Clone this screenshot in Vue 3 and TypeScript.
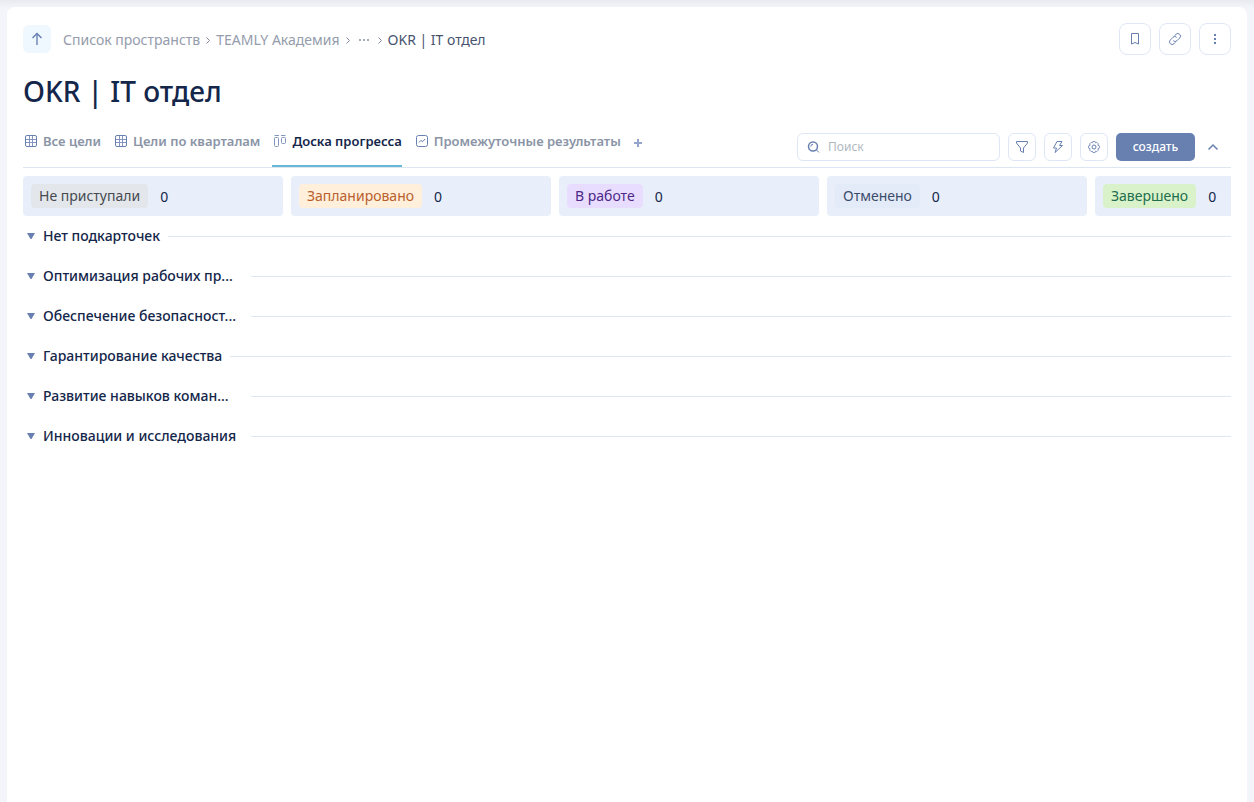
<script setup lang="ts">
import { ref } from 'vue'

type TabIcon = 'table' | 'board' | 'chart'

interface Tab {
  id: number
  label: string
  icon: TabIcon
}

interface Column {
  label: string
  tone: string
  count: number
}

interface Group {
  label: string
  clipped: boolean
}

const crumbs: string[] = ['Список пространств', 'TEAMLY Академия', '···']

const tabs: Tab[] = [
  { id: 1, label: 'Все цели', icon: 'table' },
  { id: 2, label: 'Цели по кварталам', icon: 'table' },
  { id: 3, label: 'Доска прогресса', icon: 'board' },
  { id: 4, label: 'Промежуточные результаты', icon: 'chart' },
]

const columns: Column[] = [
  { label: 'Не приступали', tone: 'grey', count: 0 },
  { label: 'Запланировано', tone: 'orange', count: 0 },
  { label: 'В работе', tone: 'purple', count: 0 },
  { label: 'Отменено', tone: 'blue', count: 0 },
  { label: 'Завершено', tone: 'green', count: 0 },
]

const groups: Group[] = [
  { label: 'Нет подкарточек', clipped: false },
  { label: 'Оптимизация рабочих пр...', clipped: true },
  { label: 'Обеспечение безопасност...', clipped: true },
  { label: 'Гарантирование качества', clipped: false },
  { label: 'Развитие навыков коман...', clipped: true },
  { label: 'Инновации и исследования', clipped: true },
]

const activeTab = ref(3)
const query = ref('')
</script>

<template>
  <div class="page">
    <main class="card">
      <header class="top">
        <button class="up" type="button" aria-label="Наверх">
          <svg width="16" height="16" viewBox="0 0 16 16"><path class="pale" d="M8 14V3" /><path class="bold" d="M3.500 7 8 2.500 12.500 7" /></svg>
        </button>
        <nav class="crumbs">
          <template v-for="crumb in crumbs" :key="crumb">
            <a v-if="crumb !== '···'" href="#">{{ crumb }}</a>
            <a v-else class="more" href="#" aria-label="Ещё">
              <svg width="12" height="12" viewBox="0 0 12 12"><path class="solid" d="M1 5h2v2H1zM5 5h2v2H5zM9 5h2v2H9z" /></svg>
            </a>
            <svg class="sep" width="16" height="16" viewBox="0 0 16 16"><path d="m6.500 5.500 3 3-3 3" /></svg>
          </template>
          <a class="current" href="#">OKR | IT отдел</a>
        </nav>
        <div class="actions">
          <button class="square" type="button" aria-label="В закладки">
            <svg width="16" height="16" viewBox="0 0 16 16"><path d="M4.500 2.500h7v10.500L8 11.500 4.500 13z" /></svg>
          </button>
          <button class="square" type="button" aria-label="Ссылка">
            <svg width="16" height="16" viewBox="0 0 16 16"><path d="M6.300 9.700a2.600 2.600 0 0 0 3.700 0l2.700-2.700a2.600 2.600 0 0 0-3.700-3.700L7.600 4.700M9.700 6.300a2.600 2.600 0 0 0-3.700 0L3.300 9a2.600 2.600 0 0 0 3.700 3.700l1.400-1.400" /></svg>
          </button>
          <button class="square" type="button" aria-label="Меню">
            <svg width="16" height="16" viewBox="0 0 16 16"><path class="solid" d="M7 3h2v2H7zM7 7h2v2H7zM7 11h2v2H7z" /></svg>
          </button>
        </div>
      </header>

      <h1>OKR | IT отдел</h1>

      <div class="bar">
        <nav class="tabs">
          <button
            v-for="tab in tabs"
            :key="tab.id"
            type="button"
            class="tab"
            :class="{ active: tab.id === activeTab }"
            @click="activeTab = tab.id"
          >
            <svg width="16" height="16" viewBox="0 0 16 16">
              <template v-if="tab.icon === 'table'">
                <path class="thin" d="M6.500 2.500v11M9.500 2.500v11M2.500 6.500h11M2.500 9.500h11" />
                <rect x="2.500" y="2.500" width="11" height="11" rx="1.500" />
              </template>
              <template v-else-if="tab.icon === 'board'">
                <path class="thin" d="M2.500 2.500h4.500M9 2.500h4.500" />
                <rect class="thin" x="2.500" y="4.500" width="4" height="9" rx="1" />
                <rect class="thin" x="9.500" y="4.500" width="4" height="6" rx="1" />
              </template>
              <template v-else>
                <rect x="2.500" y="2.500" width="11" height="11" rx="2" />
                <path d="m5 9.500 1.800-2 2 1 2.200-2.500" />
              </template>
            </svg>
            <span>{{ tab.label }}</span>
          </button>
          <button class="add" type="button" aria-label="Добавить">
            <svg width="10" height="10" viewBox="0 0 10 10"><path class="pale" d="M5 1v8M1 5h8" /></svg>
          </button>
        </nav>

        <div class="tools">
          <label class="search">
            <svg width="16" height="16" viewBox="0 0 16 16"><circle class="bold" cx="7" cy="7.500" r="4.500" /><path d="m10.500 11 2.500 2.500M4.800 7.500a2.200 2.200 0 0 1 2.200-2.200" /></svg>
            <input v-model="query" type="text" placeholder="Поиск" aria-label="Поиск" />
          </label>
          <button class="tool" type="button" aria-label="Фильтр">
            <svg width="16" height="16" viewBox="0 0 16 16"><path d="M2.500 2.500h11v1.500L9.500 9v4.500l-3-1.500V9l-4-5z" /></svg>
          </button>
          <button class="tool" type="button" aria-label="Автоматизация">
            <svg width="16" height="16" viewBox="0 0 16 16"><path d="M7 2.500h5L9.500 6.500h3L5 13.500l1.500-4.500h-3z" /></svg>
          </button>
          <button class="tool" type="button" aria-label="Настройки">
            <svg width="16" height="16" viewBox="0 0 16 16">
              <path class="thin" d="M6.900 2.500h2.200l.4 1.400 1.300-.6 1.600 1.600-.6 1.300 1.600.7v2.200l-1.600.7.6 1.300-1.600 1.600-1.300-.6-.4 1.400H6.900l-.4-1.400-1.300.6-1.600-1.600.6-1.300-1.600-.7V6.900l1.600-.7-.6-1.300 1.600-1.600 1.300.6z" />
              <circle cx="8" cy="8" r="2" />
            </svg>
          </button>
          <button class="create" type="button">создать</button>
          <button class="fold" type="button" aria-label="Свернуть">
            <svg width="16" height="16" viewBox="0 0 16 16"><path class="bold" d="m3.500 10.500 4.500-4.500 4.500 4.500" /></svg>
          </button>
        </div>
      </div>

      <section class="columns">
        <div v-for="column in columns" :key="column.label" class="column">
          <span class="tag" :class="column.tone">{{ column.label }}</span>
          <span class="count">{{ column.count }}</span>
        </div>
      </section>

      <section class="groups">
        <button v-for="group in groups" :key="group.label" type="button" class="group">
          <svg width="8" height="6" viewBox="0 0 8 6"><path class="solid" d="M0 0h8L4.500 6h-1z" /></svg>
          <span class="name" :class="{ clipped: group.clipped }">{{ group.label }}</span>
          <span class="rule"></span>
        </button>
      </section>
    </main>
  </div>
</template>

<style>
body {
  margin: 0;
  background: #f4f5fa;
}
</style>

<style scoped>
.page {
  box-sizing: border-box;
  min-height: 100vh;
  padding: 7px 7px 0;
  display: flex;
  background: linear-gradient(#e9eaef, #f4f5fa 8px);
  font-family: "Noto Sans", "Open Sans", sans-serif;
  font-size: 14px;
  line-height: 20px;
  color: #14264a;
}

.card {
  box-sizing: border-box;
  flex: 1;
  min-width: 0;
  padding: 16px 16px 0;
  background: #fff;
  border-radius: 8px 8px 0 0;
}

button {
  padding: 0;
  border: 0;
  background: none;
  font: inherit;
  color: inherit;
  cursor: pointer;
}

a {
  color: inherit;
  text-decoration: none;
}

svg {
  display: block;
  flex: none;
  fill: none;
  stroke: #6880b0;
  stroke-width: 1;
}

.solid {
  fill: #6880b0;
  stroke: none;
}

.thin {
  stroke: #8496bf;
}

.pale {
  stroke: #93a5cb;
  stroke-width: 2;
}

.bold {
  stroke-width: 1.500;
}

.top {
  display: flex;
  align-items: center;
  height: 32px;
}

.up {
  display: grid;
  place-items: center;
  width: 28px;
  height: 28px;
  border-radius: 6px;
  background: #eff8ff;
}

.crumbs {
  flex: 1;
  display: flex;
  align-items: center;
  margin-left: 12px;
  padding-top: 2px;
  color: #959cab;
}

.crumbs .more svg {
  margin: 0 2px;
}

.more .solid {
  fill: #a3abbc;
}

.sep {
  stroke: #7d889f;
}

.current {
  color: #47536e;
}

.actions {
  display: flex;
  gap: 8px;
}

.square,
.tool {
  box-sizing: border-box;
  display: grid;
  place-items: center;
  border: 1px solid #dde7f5;
  background: #fff;
}

.square {
  width: 32px;
  height: 32px;
  border-radius: 8px;
}

.tool {
  width: 28px;
  height: 28px;
  border-radius: 6px;
}

h1 {
  margin: 16px 0 0;
  font-size: 28px;
  line-height: 40px;
  font-weight: 500;
}

.bar {
  display: flex;
  justify-content: space-between;
  box-sizing: border-box;
  height: 57px;
  border-bottom: 1px solid #dde7f2;
}

.tabs {
  display: flex;
  gap: 12px;
}

.tab {
  display: flex;
  align-items: flex-start;
  gap: 4px;
  box-sizing: border-box;
  height: 56px;
  padding-top: 20px;
  border-bottom: 2px solid transparent;
  font-size: 13px;
  font-weight: 600;
  color: #8a94a6;
}

.tab svg {
  margin-top: 2px;
}

.tab.active {
  color: #14264a;
  border-color: #67b7d8;
}

.add {
  align-self: flex-start;
  height: 20px;
  margin-top: 22px;
}

.tools {
  display: flex;
  align-items: flex-start;
  gap: 8px;
  padding-top: 22px;
}

.search {
  box-sizing: border-box;
  display: flex;
  align-items: center;
  gap: 6px;
  width: 203px;
  height: 28px;
  padding: 0 8px;
  border: 1px solid #dde7f5;
  border-radius: 6px;
}

.search input {
  flex: 1;
  min-width: 0;
  padding: 0;
  border: 0;
  outline: 0;
  background: none;
  font: inherit;
  font-size: 12px;
  color: #14264a;
}

.search input::placeholder {
  color: #afb9bf;
  opacity: 1;
}

.create {
  width: 79px;
  height: 28px;
  border-radius: 5px;
  background: #6880b0;
  font-size: 12px;
  font-weight: 500;
  color: #fff;
}

.fold {
  display: grid;
  place-items: center;
  width: 20px;
  height: 28px;
  margin-right: 8px;
}

.columns {
  display: flex;
  gap: 8px;
  margin-top: 8px;
  overflow: hidden;
}

.column {
  flex: none;
  box-sizing: border-box;
  display: flex;
  align-items: center;
  gap: 12px;
  width: 260px;
  height: 40px;
  padding: 0 8px;
  border-radius: 4px;
  background: #e8effa;
}

.tag {
  padding: 2px 8px;
  border-radius: 4px;
}

.count {
  padding-top: 2px;
}

.grey {
  background: #e3e7ec;
  color: #46494f;
}

.orange {
  background: #ffefdb;
  color: #b95f2d;
}

.purple {
  background: #e9ddff;
  color: #4c2889;
}

.blue {
  background: #e4ebf8;
  color: #3c4c6c;
}

.green {
  background: #d9f2ca;
  color: #216e4e;
}

.group {
  display: flex;
  align-items: center;
  width: 100%;
  height: 40px;
  padding-left: 4px;
  text-align: left;
  font-weight: 500;
}

.name {
  flex: none;
  margin: 0 8px;
  white-space: nowrap;
}

.clipped {
  width: 200px;
}

.rule {
  flex: 1;
  height: 1px;
  background: #dde7f5;
}
</style>
